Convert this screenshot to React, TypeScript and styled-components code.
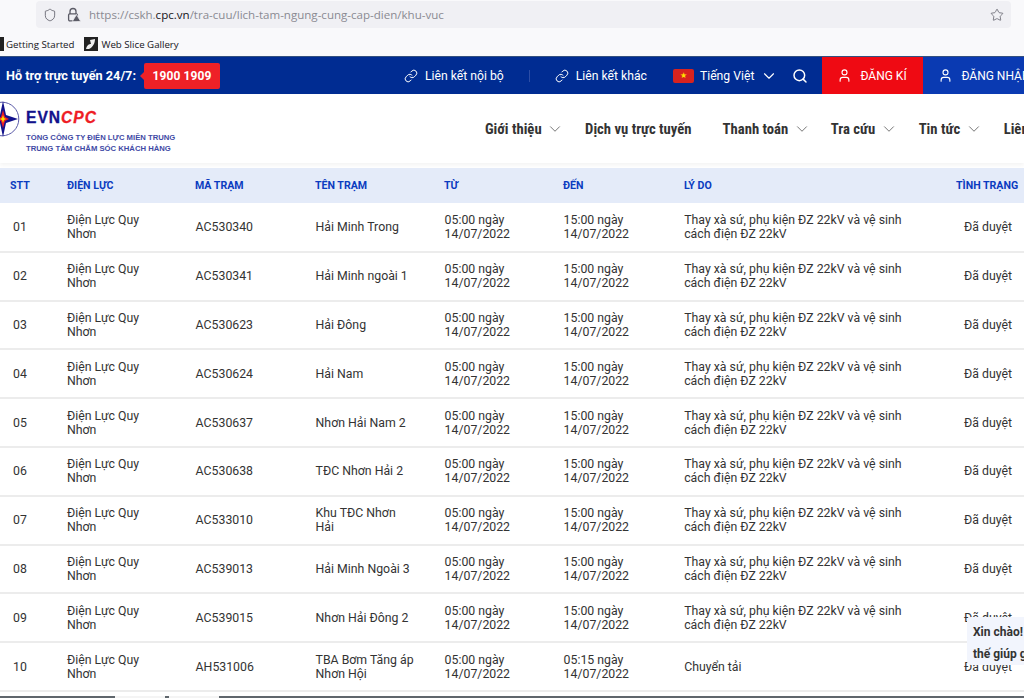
import React from "react";
import styled, { createGlobalStyle } from "styled-components";
import { ChevronDown, Link, Search, Shield, Star, User } from "lucide-react";

interface OutageRow {
  stt: string;
  station: string;
  name: string;
  to?: string;
  reason?: string;
}

const GlobalStyle = createGlobalStyle`
  html, body {
    margin: 0;
    padding: 0;
    background: #fff;
    font-family: Roboto, "Liberation Sans", sans-serif;
    overflow: hidden;
  }
`;

const Page = styled.div`
  width: 1024px;
  height: 698px;
  display: flex;
  flex-direction: column;
  overflow: hidden;
  position: relative;
`;

const BrowserChrome = styled.div`
  height: 57px;
  flex: none;
  padding-top: 1px;
  background: #f9f9fb;
  border-bottom: 1px solid #33507f;
  box-sizing: border-box;
`;

const UrlBar = styled.div`
  height: 27px;
  margin-left: 36px;
  width: 975px;
  padding-right: 7px;
  box-sizing: border-box;
  background: #f0f0f4;
  border-radius: 4px;
  display: flex;
  align-items: center;
  color: #5b5b66;
  svg {
    flex: none;
  }
`;

const Url = styled.span`
  font-family: "Open Sans", sans-serif;
  font-size: 11.56px;
  color: #8a8a92;
  margin-left: 8px;
  white-space: nowrap;
  b {
    font-weight: 400;
    color: #15141a;
  }
`;

const StarSlot = styled.span`
  display: flex;
  margin-left: auto;
`;

const Bookmarks = styled.div`
  height: 32px;
  display: flex;
  align-items: center;
  font-family: "Open Sans", sans-serif;
  font-size: 9.7px;
  color: #15141a;
`;

const BookmarkIcon = styled.span`
  width: 4px;
  height: 14px;
  background: #222;
  margin-right: 2px;
  flex: none;
`;

const SliceIcon = styled.svg`
  margin-left: 10px;
  margin-right: 3px;
  flex: none;
`;

const TopBar = styled.div`
  height: 37px;
  flex: none;
  background: #002c92;
  display: flex;
  align-items: center;
  color: #fff;
  font-size: 12.2px;
  white-space: nowrap;
  > * {
    flex: none;
  }
`;

const Hotline = styled.span`
  font-weight: 700;
  margin-left: 6px;
  font-size: 12.7px;
`;

const Badge = styled.span`
  position: relative;
  margin-left: 8px;
  width: 76px;
  height: 26px;
  background: #ee2127;
  border-radius: 2px;
  display: flex;
  align-items: center;
  justify-content: center;
  font-weight: 700;
  font-size: 12px;
  letter-spacing: 0.1px;
  &::before {
    content: "";
    position: absolute;
    left: -4px;
    top: 9px;
    border-style: solid;
    border-width: 4px 4px 4px 0;
    border-color: transparent #ee2127 transparent transparent;
  }
`;

const TopLink = styled.span<{ $ml: number }>`
  display: flex;
  align-items: center;
  gap: 7px;
  margin-left: ${(p) => p.$ml}px;
`;

const Divider = styled.span`
  width: 1px;
  height: 12px;
  background: #2c4da6;
  margin-left: 25px;
`;

const Flag = styled.span`
  width: 21px;
  height: 14px;
  background: #d8231f;
  border-radius: 2px;
  margin-left: 26px;
  display: flex;
  align-items: center;
  justify-content: center;
  color: #ffe000;
  font-size: 8px;
  line-height: 1;
`;

const Lang = styled.span`
  margin-left: 6px;
`;

const IconSlot = styled.span<{ $ml: number }>`
  display: flex;
  margin-left: ${(p) => p.$ml}px;
`;

const AuthButton = styled.span<{ $bg: string; $w: number; $ml?: number }>`
  height: 100%;
  width: ${(p) => p.$w}px;
  margin-left: ${(p) => p.$ml ?? 0}px;
  background: ${(p) => p.$bg};
  display: flex;
  align-items: center;
  gap: 8px;
  padding-left: 15px;
  box-sizing: border-box;
  font-size: 12px;
`;

const NavBar = styled.div`
  height: 68px;
  padding-bottom: 1px;
  box-sizing: border-box;
  flex: none;
  margin-top: 1px;
  background: #fff;
  display: flex;
  align-items: center;
  box-shadow: 0 2px 4px rgba(0, 0, 0, 0.05);
  white-space: nowrap;
  position: relative;
  > * {
    flex: none;
  }
`;

const Logo = styled.div`
  width: 176px;
  align-self: flex-start;
  padding-top: 6px;
  display: grid;
  grid-template-columns: 26px auto;
  align-items: start;
`;

const LogoTexts = styled.div`
  display: flex;
  flex-direction: column;
  margin-top: 8px;
`;

const Brand = styled.div`
  font-family: "Liberation Sans", sans-serif;
  font-weight: 700;
  font-size: 15.6px;
  line-height: 18px;
  margin-bottom: 4.5px;
  letter-spacing: 1px;
  color: #12128c;
  -webkit-text-stroke: 0.3px currentColor;
  i {
    color: #ee1c25;
  }
`;

const LogoLine = styled.div`
  font-family: "Liberation Sans", sans-serif;
  font-size: 7.7px;
  line-height: 11px;
  font-weight: 700;
  color: #3f4aa5;
`;

const NavItem = styled.span<{ $ml: number }>`
  display: flex;
  align-items: center;
  gap: 4.5px;
  margin-left: ${(p) => p.$ml}px;
  font-family: Roboto, sans-serif;
  font-stretch: 75%;
  font-weight: 700;
  font-size: 14.7px;
  color: #333;
  svg {
    color: #666;
  }
`;

const Table = styled.table`
  width: 1100px;
  flex: none;
  margin-top: 5px;
  border-collapse: collapse;
  table-layout: fixed;
  background: #fff;
`;

const HeadCell = styled.th`
  height: 35px;
  padding: 0 0 0 10px;
  background: #e4ebf9;
  color: #0b3cc0;
  font-size: 10.6px;
  font-weight: 700;
  text-align: left;
`;

const BodyRow = styled.tr`
  height: 48.8px;
  border-bottom: 2px solid #ececec;
`;

const Cell = styled.td<{ $pl?: number; $pr?: number }>`
  padding: 0 ${(p) => p.$pr ?? 10}px 0 ${(p) => p.$pl ?? 10.6}px;
  font-size: 12.3px;
  line-height: 14px;
  color: #333;
  vertical-align: middle;
`;

const SttCell = styled(Cell)`
  padding-left: 13px;
`;

const StatusCell = styled(Cell)`
  padding-left: 18px;
  white-space: nowrap;
`;

const ChatBubble = styled.div`
  position: absolute;
  left: 967px;
  top: 617px;
  width: 120px;
  height: 48px;
  background: #f2f5fd;
  border-radius: 4px;
  padding: 4px 0 0 6px;
  box-sizing: border-box;
  font-size: 12px;
  font-weight: 700;
  line-height: 22px;
  color: #333;
  white-space: nowrap;
`;

const BottomStrip = styled.div`
  position: absolute;
  left: 0;
  right: 0;
  bottom: 0;
  height: 2px;
  background: #5f666c;
`;

const StripTab = styled.span<{ $l: number; $w: number }>`
  position: absolute;
  left: ${(p) => p.$l}px;
  width: ${(p) => p.$w}px;
  top: 0;
  height: 2px;
  background: #f4f4f4;
`;

const DEFAULT_REASON = "Thay xà sứ, phụ kiện ĐZ 22kV và vệ sinh cách điện ĐZ 22kV";

const rows: OutageRow[] = [
  { stt: "01", station: "AC530340", name: "Hải Minh Trong" },
  { stt: "02", station: "AC530341", name: "Hải Minh ngoài 1" },
  { stt: "03", station: "AC530623", name: "Hải Đông" },
  { stt: "04", station: "AC530624", name: "Hải Nam" },
  { stt: "05", station: "AC530637", name: "Nhơn Hải Nam 2" },
  { stt: "06", station: "AC530638", name: "TĐC Nhơn Hải 2" },
  { stt: "07", station: "AC533010", name: "Khu TĐC Nhơn Hải" },
  { stt: "08", station: "AC539013", name: "Hải Minh Ngoài 3" },
  { stt: "09", station: "AC539015", name: "Nhơn Hải Đông 2" },
  { stt: "10", station: "AH531006", name: "TBA Bơm Tăng áp Nhơn Hội", to: "05:15 ngày", reason: "Chuyển tải" },
];

const headers = ["STT", "ĐIỆN LỰC", "MÃ TRẠM", "TÊN TRẠM", "TỪ", "ĐẾN", "LÝ DO", "TÌNH TRẠNG"];
const colWidths = [57, 128, 120, 129, 119, 121, 272, 154];

const LogoMark = () => (
  <svg width="26" height="36" viewBox="0 0 26 36">
    <circle cx="2" cy="18" r="16.8" fill="#fff" stroke="#5a5aa8" strokeWidth="1" />
    <path d="M3 0 L6 14 L18 18 L6 22 L3 36 L0 22 L-8 18 L0 14 Z" fill="#12128c" />
    <path d="M3 9 L5 16 L9 18 L5 20 L3 27 L1 20 L-3 18 L1 16 Z" fill="#ee1c25" />
    <path d="M3 14 L4 17 L6 18 L4 19 L3 22 L2 19 L0 18 L2 17 Z" fill="#ffe000" />
  </svg>
);

const LockWarning = () => (
  <svg width="15" height="15" viewBox="0 0 15 15" fill="none">
    <path d="M4 7V4.5a3 3 0 0 1 6 0V7" stroke="#5b5b66" strokeWidth="1.3" />
    <rect x="2.6" y="6.8" width="8.8" height="7" rx="1.2" stroke="#5b5b66" strokeWidth="1.3" />
    <path d="M10.5 7.5 L14.8 14.6 H6.2 Z" fill="#5b5b66" stroke="#f0f0f4" strokeWidth="0.8" />
  </svg>
);

const SliceMark = () => (
  <SliceIcon width="14" height="14" viewBox="0 0 14 14">
    <rect width="14" height="14" fill="#222" />
    <path d="M2 12 C3 8 5 7 7 7 L6 3 L11 2 C11 6 9 10 5 12 Z" fill="#eee" />
  </SliceIcon>
);

const NavChevron = () => <ChevronDown size={18} strokeWidth={1.2} />;

const App: React.FC = () => {
  return (
    <Page>
      <GlobalStyle />
      <BrowserChrome>
        <UrlBar>
          <IconSlot $ml={7}>
            <Shield size={14} strokeWidth={1.4} />
          </IconSlot>
          <IconSlot $ml={9}>
            <LockWarning />
          </IconSlot>
          <Url>
            https://cskh.<b>cpc.vn</b>/tra-cuu/lich-tam-ngung-cung-cap-dien/khu-vuc
          </Url>
          <StarSlot>
            <Star size={14} strokeWidth={1.3} />
          </StarSlot>
        </UrlBar>
        <Bookmarks>
          <BookmarkIcon />
          <span>Getting Started</span>
          <SliceMark />
          <span>Web Slice Gallery</span>
        </Bookmarks>
      </BrowserChrome>

      <TopBar>
        <Hotline>Hỗ trợ trực tuyến 24/7:</Hotline>
        <Badge>1900 1909</Badge>
        <TopLink $ml={184}>
          <Link size={14} strokeWidth={1.7} />
          Liên kết nội bộ
        </TopLink>
        <Divider />
        <TopLink $ml={25}>
          <Link size={14} strokeWidth={1.7} />
          Liên kết khác
        </TopLink>
        <Flag>★</Flag>
        <Lang>Tiếng Việt</Lang>
        <IconSlot $ml={6}>
          <ChevronDown size={18} strokeWidth={1.5} />
        </IconSlot>
        <IconSlot $ml={14}>
          <Search size={16} strokeWidth={2.2} />
        </IconSlot>
        <AuthButton $bg="#ef0a13" $w={101} $ml={14}>
          <User size={15} strokeWidth={1.8} />
          ĐĂNG KÍ
        </AuthButton>
        <AuthButton $bg="#0a3ab2" $w={110}>
          <User size={15} strokeWidth={1.8} />
          ĐĂNG NHẬP
        </AuthButton>
      </TopBar>

      <NavBar>
        <Logo>
          <LogoMark />
          <LogoTexts>
            <Brand>
              EVN<i>CPC</i>
            </Brand>
            <LogoLine>TỔNG CÔNG TY ĐIỆN LỰC MIỀN TRUNG</LogoLine>
            <LogoLine>TRUNG TÂM CHĂM SÓC KHÁCH HÀNG</LogoLine>
          </LogoTexts>
        </Logo>
        <NavItem $ml={309}>
          Giới thiệu <NavChevron />
        </NavItem>
        <NavItem $ml={21}>Dịch vụ trực tuyến</NavItem>
        <NavItem $ml={31}>
          Thanh toán <NavChevron />
        </NavItem>
        <NavItem $ml={20}>
          Tra cứu <NavChevron />
        </NavItem>
        <NavItem $ml={21}>
          Tin tức <NavChevron />
        </NavItem>
        <NavItem $ml={21}>Liên hệ</NavItem>
      </NavBar>

      <Table>
        <colgroup>
          {colWidths.map((w, i) => (
            <col key={i} width={w} />
          ))}
        </colgroup>
        <thead>
          <tr>
            {headers.map((h) => (
              <HeadCell key={h}>{h}</HeadCell>
            ))}
          </tr>
        </thead>
        <tbody>
          {rows.map((r) => (
            <BodyRow key={r.stt}>
              <SttCell>{r.stt}</SttCell>
              <Cell $pl={10} $pr={40}>Điện Lực Quy Nhơn</Cell>
              <Cell>{r.station}</Cell>
              <Cell $pr={18}>{r.name}</Cell>
              <Cell>
                05:00 ngày
                <br />
                14/07/2022
              </Cell>
              <Cell>
                {r.to ?? "15:00 ngày"}
                <br />
                14/07/2022
              </Cell>
              <Cell $pl={10.2} $pr={40}>{r.reason ?? DEFAULT_REASON}</Cell>
              <StatusCell>Đã duyệt</StatusCell>
            </BodyRow>
          ))}
        </tbody>
      </Table>

      <ChatBubble>
        Xin chào! Tôi có
        <br />
        thế giúp gì cho bạn?
      </ChatBubble>
      <BottomStrip>
        <StripTab $l={115} $w={50} />
        <StripTab $l={169} $w={50} />
      </BottomStrip>
    </Page>
  );
};

export default App;
